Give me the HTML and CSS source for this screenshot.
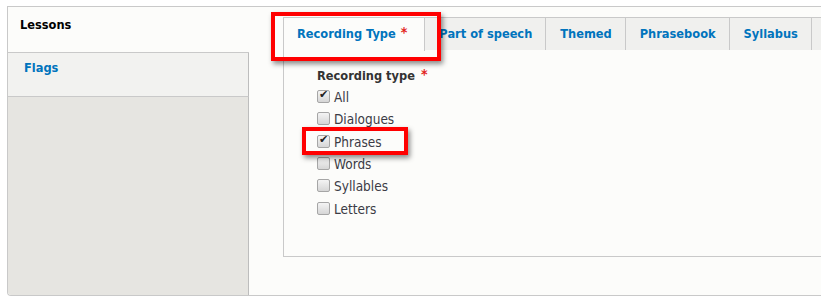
FILE: index.html
```html
<!DOCTYPE html>
<html>
<head>
<meta charset="utf-8">
<link rel="stylesheet" href="styles.css">
</head>
<body>
<div class="frame">
  <div class="vtabs">
    <div class="vtab vtab-active"><strong>Lessons</strong></div>
    <div class="vtab vtab-idle"><a class="link">Flags</a></div>
    <div class="vfill"></div>
  </div>
  <div class="pane">
    <div class="htabs">
      <div class="htab htab-active"><span class="link">Recording Type</span><span class="req">*</span></div>
      <div class="htab"><span class="link">Part of speech</span></div>
      <div class="htab"><span class="link">Themed</span></div>
      <div class="htab"><span class="link">Phrasebook</span></div>
      <div class="htab"><span class="link">Syllabus</span></div>
      <div class="htab htab-more"></div>
    </div>
    <div class="htab-content">
      <div class="field-label">Recording type<span class="req req-label">*</span></div>
      <div class="opts">
        <div class="opt"><span class="cb cb-on"></span><span class="opt-text">All</span></div>
        <div class="opt"><span class="cb"></span><span class="opt-text">Dialogues</span></div>
        <div class="opt"><span class="cb cb-on"></span><span class="opt-text">Phrases</span></div>
        <div class="opt"><span class="cb"></span><span class="opt-text">Words</span></div>
        <div class="opt"><span class="cb"></span><span class="opt-text">Syllables</span></div>
        <div class="opt"><span class="cb"></span><span class="opt-text">Letters</span></div>
      </div>
    </div>
  </div>
</div>
<div class="mark mark-tab"></div>
<div class="mark mark-opt"></div>
</body>
</html>
```
FILE: styles.css
```css
html, body {
  margin: 0;
  padding: 0;
  background: #ffffff;
  overflow: hidden;
}
body {
  width: 821px;
  height: 308px;
  position: relative;
  font-family: "DejaVu Sans Condensed", "DejaVu Sans", sans-serif;
  font-size: 13.5px;
  color: #333;
}
.frame {
  display: flex;
  margin: 6px 0 0 7px;
  width: 900px;
  height: 288px;
  border: 1px solid #c9c9c9;
  border-right: 0;
  border-radius: 0 0 0 4px;
  overflow: hidden;
}
.vtabs {
  width: 241px;
  display: flex;
  flex-direction: column;
  flex-shrink: 0;
}
.vtab {
  line-height: 18px;
  font-size: 12.7px;
  border-bottom: 1px solid #c9c9c9;
  box-sizing: border-box;
}
.vtab-active {
  background: #fcfcfa;
  padding: 9px 0 0 12px;
  height: 46px;
  color: #000;
}
.vtab-idle {
  background: #f2f2f0;
  height: 44px;
  padding: 6px 0 0 16px;
  border-right: 1px solid #bdbdbd;
}
.vfill {
  flex: 1;
  background: #e6e5e1;
  border-right: 1px solid #bdbdbd;
}
.link {
  color: #0074bd;
  font-weight: bold;
  text-decoration: none;
}
.pane {
  flex: 1;
  background: #fcfcfa;
  padding: 10px 0 0 34px;
}
.htabs {
  display: flex;
  height: 33px;
  margin-bottom: -1px;
  font-size: 12.7px;
}
.htab {
  height: 33px;
  box-sizing: border-box;
  line-height: 32px;
  padding: 0 13px 0 14px;
  background: #f0f0ee;
  border-top: 1px solid #c9c9c9;
  border-right: 1px solid #c9c9c9;
  white-space: nowrap;
}
.htab:first-child {
  border-left: 1px solid #c9c9c9;
}
.htab-active {
  background: #fcfcfa;
  padding: 0 17px 0 13px;
  height: 34px;
}
.htab-more {
  width: 60px;
}
.req {
  color: #e2231a;
  font-weight: bold;
  font-size: 14px;
  line-height: 0;
  margin-left: 5px;
  vertical-align: 1px;
}
.req-label {
  margin-left: 6px;
}
.htab-content {
  border-top: 1px solid #c9c9c9;
  border-left: 1px solid #c9c9c9;
  border-bottom: 1px solid #c9c9c9;
  height: 189px;
  padding: 17px 0 0 33px;
}
.field-label {
  font-weight: bold;
  font-size: 12.7px;
  line-height: 18px;
  height: 19px;
  color: #333;
}
.opt {
  display: flex;
  align-items: center;
  height: 22.3px;
}
.opt-text {
  margin-left: 4px;
  color: #3b3b45;
}
.cb {
  width: 11px;
  height: 11px;
  border: 1px solid #a6a6a6;
  border-radius: 2px;
  background: linear-gradient(#f4f4f4, #d6d6d6);
  position: relative;
  flex-shrink: 0;
  margin-top: -1px;
}
.cb-on::after {
  content: "\2714";
  position: absolute;
  left: 1px;
  top: -3px;
  font-size: 11px;
  font-family: "DejaVu Sans", sans-serif;
  color: #222;
}
.mark {
  position: absolute;
  border: 4px solid #ff0000;
  box-shadow: 2px 3px 5px rgba(0,0,0,0.45);
  box-sizing: border-box;
}
.mark-tab {
  left: 271px;
  top: 12px;
  width: 170px;
  height: 49px;
}
.mark-opt {
  left: 302px;
  top: 127px;
  width: 106px;
  height: 28px;
}
```
